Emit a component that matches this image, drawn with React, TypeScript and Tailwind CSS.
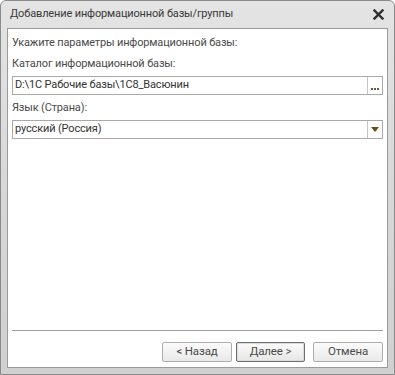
import React from "react";

function DialogButton({ label, primary }: { label: string; primary?: boolean }) {
  return (
    <button
      className={
        primary
          ? "flex h-[20px] w-[69px] items-center justify-center rounded-[2px] border border-[#6f6f6f] bg-gradient-to-b from-[#fbfbfb] to-[#e6e6e6] text-[11.5px] text-[#4a4a4a] shadow-[inset_0_0_0_1px_#dadada]"
          : "flex h-[20px] w-[70px] items-center justify-center rounded-[2px] border border-[#adadad] bg-gradient-to-b from-[#fbfbfb] to-[#e9e9e9] text-[11.5px] text-[#4a4a4a]"
      }
    >
      {label}
    </button>
  );
}

export default function App() {
  return (
    <div
      className="h-[375px] w-[395px] bg-white"
      style={{ fontFamily: 'Roboto, "Liberation Sans", sans-serif' }}
    >
      <div className="flex h-full flex-col rounded-t-[6px] border border-[#8a8a8a] bg-gradient-to-b from-[#e4e4e4] via-[#d8d8d8] to-[#d0d0d0]">
        <div className="flex h-[27px] shrink-0 items-center justify-between pl-[9px] pr-[10px]">
          <span className="text-[11px] tracking-[-0.15px] text-[#3a3a3a]">Добавление информационной базы/группы</span>
          <svg width="11" height="11" viewBox="0 0 11 11">
            <path d="M1.5 1.5 L9.5 9.5 M9.5 1.5 L1.5 9.5" stroke="#2e2e2e" strokeWidth="2.4" strokeLinecap="square" />
          </svg>
        </div>

        <div className="mx-[6px] mb-[6px] flex flex-1 flex-col border border-[#9a9a9a] bg-white px-[4px] pb-[5px] text-[11px] tracking-[-0.15px] text-[#4a4a4a]">
          <div className="mt-[6px] leading-[16px]">Укажите параметры информационной базы:</div>
          <div className="mt-[5px] leading-[16px]">Каталог информационной базы:</div>
          <div className="mt-[4px] flex h-[19px] border border-[#a9a9a9]">
            <div className="flex flex-1 items-center pl-[2px] text-[#333]">D:\1C Рабочие базы\1C8_Васюнин</div>
            <div className="flex w-[15px] items-end justify-center border-l border-[#c4c4c4] pb-[4px]">
              <div className="flex gap-[1px]">
                <span className="h-[2px] w-[2px] bg-[#6b5a3a]" />
                <span className="h-[2px] w-[2px] bg-[#6b5a3a]" />
                <span className="h-[2px] w-[2px] bg-[#6b5a3a]" />
              </div>
            </div>
          </div>
          <div className="mt-[5px] leading-[16px]">Язык (Страна):</div>
          <div className="mt-[4px] flex h-[19px] border border-[#a9a9a9]">
            <div className="flex flex-1 items-center pl-[2px] text-[#333]">русский (Россия)</div>
            <div className="flex w-[15px] items-center justify-center border-l border-[#c4c4c4]">
              <svg width="8" height="5" viewBox="0 0 8 5">
                <path d="M0 0 H8 L4 5 Z" fill="#6e4f12" />
              </svg>
            </div>
          </div>

          <div className="flex-1" />

          <div className="border-t border-[#a0a0a0]" />
          <div className="mt-[11px] flex justify-end">
            <DialogButton label="< Назад" />
            <div className="ml-[4px]">
              <DialogButton label="Далее >" primary />
            </div>
            <div className="ml-[8px]">
              <DialogButton label="Отмена" />
            </div>
          </div>
        </div>
      </div>
    </div>
  );
}
